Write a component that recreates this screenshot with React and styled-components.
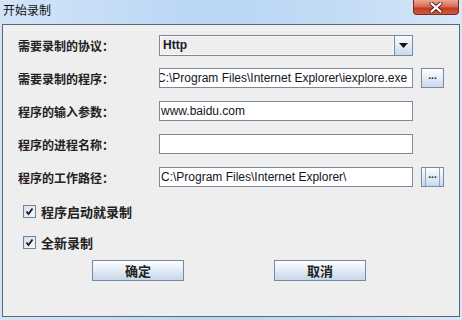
import styled, { createGlobalStyle } from "styled-components";

const GlobalStyle = createGlobalStyle`
    body{
        margin: 0;
        background: #c9dff5;
    }
`

const cjk = `"Noto Sans CJK SC", sans-serif`;
const latin = `"Liberation Sans", Arial, sans-serif`;

const Window = styled.div`
    width: 462px;
    height: 320px;
    display: flex;
    flex-direction: column;
    background: linear-gradient(90deg, #d3e4f7 0%, #b9d6f5 45%, #c4dcf5 75%, #d6e7f8 100%);
    font-family: ${cjk};
    overflow: hidden;
`

const TitleBar = styled.div`
    height: 24px;
    display: flex;
    align-items: flex-start;
    justify-content: space-between;
    padding: 0 3px 0 3px;
    box-sizing: border-box;
`

const Title = styled.div`
    font-size: 12px;
    line-height: 12px;
    margin-top: 4px;
    color: #111;
`

const CloseButton = styled.div`
    width: 46px;
    height: 15px;
    box-sizing: border-box;
    border: 1px solid #7d2b1f;
    border-top: none;
    border-radius: 0 0 4px 4px;
    background: linear-gradient(180deg, #e9a893 0%, #d86e57 45%, #c23d25 60%, #d4583c 100%);
    display: flex;
    align-items: center;
    justify-content: center;
`

const Panel = styled.div`
    flex: 1;
    margin: 0 2px 3px 2px;
    border: 1px solid #5d6876;
    background: #eeeeee;
    display: flex;
    flex-direction: column;
`

const Form = styled.div`
    display: grid;
    grid-template-columns: 141px 254px 31px;
    grid-auto-rows: 20px;
    row-gap: 13px;
    padding: 10px 0 0 15px;
`

const Label = styled.div`
    font-family: ${cjk};
    font-size: 12px;
    font-weight: bold;
    color: #222;
    display: flex;
    align-items: center;
    white-space: nowrap;
`

const Field = styled.div`
    height: 20px;
    box-sizing: border-box;
    border: 1px solid #7a8a9c;
    background: #fff;
    overflow: hidden;
    white-space: nowrap;
    font-family: ${latin};
    font-size: 12px;
    line-height: 18px;
    color: #141420;
    padding-left: 1px;
    span{
        display: inline-block;
        margin-left: ${p => p.$shift || 0}px;
    }
`

const Combo = styled.div`
    height: 21px;
    box-sizing: border-box;
    border: 1px solid #7a8a9c;
    display: flex;
    background: #eeeeee;
`

const ComboValue = styled.div`
    flex: 1;
    border: 1px solid #fafafa;
    font-family: ${latin};
    font-size: 12px;
    font-weight: bold;
    color: #1a1a2a;
    line-height: 17px;
    padding-left: 2px;
`

const ComboArrow = styled.div`
    width: 17px;
    border-left: 1px solid #7a8a9c;
    background: linear-gradient(180deg, #fbfcfe 0%, #e4ecf6 50%, #c9d9ea 100%);
    display: flex;
    align-items: center;
    justify-content: center;
`

const SmallButton = styled.div`
    justify-self: end;
    width: 23px;
    height: 20px;
    box-sizing: border-box;
    border: 1px solid #7a8a9c;
    background: linear-gradient(180deg, #fdfeff 0%, #e6eef7 45%, #c8d9ec 100%);
    display: flex;
    justify-content: center;
    font-family: ${latin};
    font-size: 10px;
    font-weight: bold;
    color: #222;
    line-height: 14px;
    span{
        padding: 0 2px;
        border-left: 1px solid ${p => p.$focused ? "#8fa3b9" : "transparent"};
        border-right: 1px solid ${p => p.$focused ? "#8fa3b9" : "transparent"};
    }
`

const Checks = styled.div`
    display: flex;
    flex-direction: column;
    gap: 11px;
    padding: 14px 0 0 20px;
`

const CheckRow = styled.div`
    height: 20px;
    display: flex;
    align-items: center;
    gap: 5px;
    font-size: 13px;
    font-weight: bold;
    color: #222;
`

const Box = styled.div`
    width: 13px;
    height: 13px;
    box-sizing: border-box;
    border: 1px solid #6f8296;
    background: linear-gradient(135deg, #d4e0ee 0%, #f4f8fc 100%);
    display: flex;
    align-items: center;
    justify-content: center;
`

const Actions = styled.div`
    display: flex;
    gap: 90px;
    padding: 8px 0 0 89px;
`

const Button = styled.div`
    width: 92px;
    height: 21px;
    box-sizing: border-box;
    border: 1px solid #7a8a9c;
    background: linear-gradient(180deg, #fdfeff 0%, #e8eff8 40%, #c6d7ea 100%);
    display: flex;
    align-items: center;
    justify-content: center;
    font-size: 13px;
    font-weight: bold;
    color: #222;
`

const rows = [
    { label: "需要录制的程序：", value: "C:\\Program Files\\Internet Explorer\\iexplore.exe", shift: -4, browse: true },
    { label: "程序的输入参数：", value: "www.baidu.com" },
    { label: "程序的进程名称：", value: "" },
    { label: "程序的工作路径：", value: "C:\\Program Files\\Internet Explorer\\", browse: true, focused: true },
]

const Check = () => (
    <Box>
        <svg width="9" height="9" viewBox="0 0 9 9">
            <path d="M1.5 4.5 L3.5 7 L7.5 1.5" fill="none" stroke="#1b1b1b" strokeWidth="1.8" />
        </svg>
    </Box>
)

const App = () => {
    return(
        <Window>
            <GlobalStyle/>
            <TitleBar>
                <Title>开始录制</Title>
                <CloseButton>
                    <svg width="14" height="11" viewBox="0 0 14 11">
                        <path d="M2.5 1.5 L11.5 9.5 M11.5 1.5 L2.5 9.5" stroke="#5a2018" strokeWidth="4" strokeLinecap="round" />
                        <path d="M2.5 1.5 L11.5 9.5 M11.5 1.5 L2.5 9.5" stroke="#ffffff" strokeWidth="2.2" strokeLinecap="round" />
                    </svg>
                </CloseButton>
            </TitleBar>
            <Panel>
                <Form>
                    <Label>需要录制的协议：</Label>
                    <Combo>
                        <ComboValue>Http</ComboValue>
                        <ComboArrow>
                            <svg width="9" height="5" viewBox="0 0 9 5">
                                <path d="M0 0 H9 L4.5 5 Z" fill="#111" />
                            </svg>
                        </ComboArrow>
                    </Combo>
                    <div></div>
                    {rows.map(r => (
                        <>
                            <Label key={r.label}>{r.label}</Label>
                            <Field $shift={r.shift}><span>{r.value}</span></Field>
                            {r.browse ? <SmallButton $focused={r.focused}><span>...</span></SmallButton> : <div></div>}
                        </>
                    ))}
                </Form>
                <Checks>
                    <CheckRow><Check/>程序启动就录制</CheckRow>
                    <CheckRow><Check/>全新录制</CheckRow>
                </Checks>
                <Actions>
                    <Button>确定</Button>
                    <Button>取消</Button>
                </Actions>
            </Panel>
        </Window>
    )
}

export default App;
